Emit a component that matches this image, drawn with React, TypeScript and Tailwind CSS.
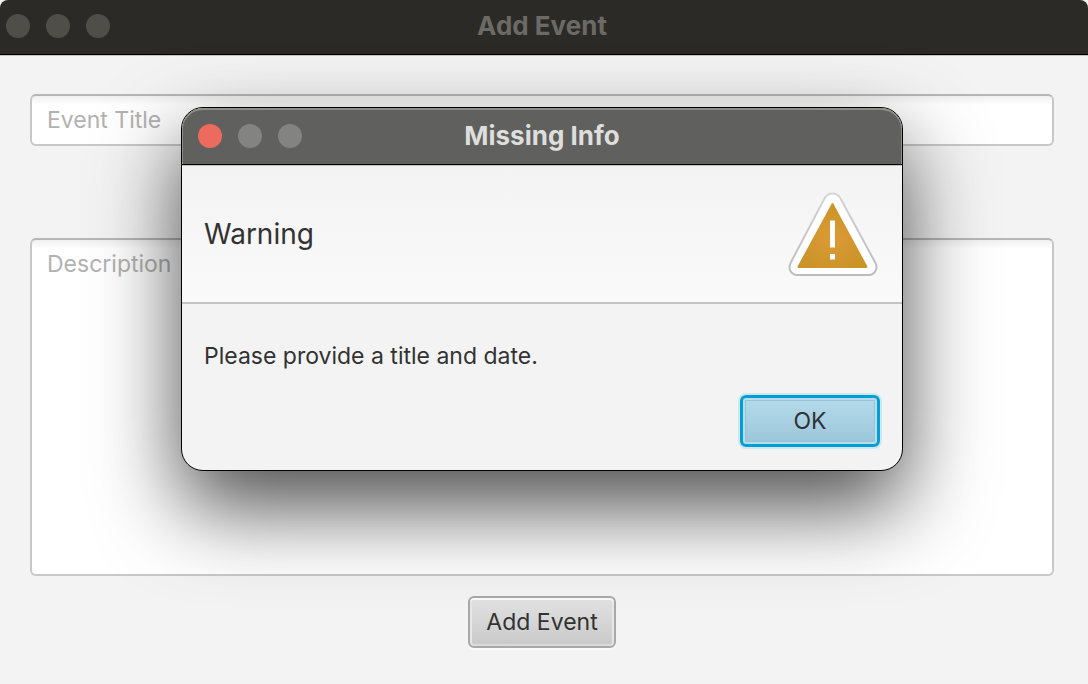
import { useId } from "react";

function TrafficLights({ closeClass, idleClass }: { closeClass: string; idleClass: string }) {
  return (
    <div className="flex gap-4">
      <button type="button" aria-label="Close" className={`size-6 rounded-full ${closeClass}`} />
      <button type="button" aria-label="Minimize" className={`size-6 rounded-full ${idleClass}`} />
      <button type="button" aria-label="Zoom" className={`size-6 rounded-full ${idleClass}`} />
    </div>
  );
}

function WarningIcon() {
  const fill = useId();
  const edge = useId();
  return (
    <svg width="90" height="84" viewBox="0 0 90 84" aria-hidden="true">
      <defs>
        <radialGradient id={fill} cx="0.5" cy="0.55" r="0.5">
          <stop offset="0" stopColor="#dd9a36" />
          <stop offset="1" stopColor="#cb9429" />
        </radialGradient>
        <linearGradient id={edge} x1="0" y1="0" x2="0" y2="1">
          <stop offset="0" stopColor="#d4d4d4" />
          <stop offset="1" stopColor="#bcbcbc" />
        </linearGradient>
      </defs>
      <path
        d="M36.5 6.5C40 -0.2 49 -0.2 52.500 6.500L87.200 70.500C90.400 76.600 87 83 80.500 83H9.500C3 83 -0.400 76.600 2.800 70.500Z"
        fill="#fff"
        stroke={`url(#${edge})`}
        strokeWidth="2"
      />
      <path
        d="M43.600 11.800Q44.500 10.200 45.400 11.800L79.200 74Q80 76 78.200 76H10.800Q9 76 9.800 74Z"
        fill={`url(#${fill})`}
      />
      <path d="M42 28.500h5v27h-5zM42 62h5v5.500h-5z" fill="#fff" />
    </svg>
  );
}

export default function App() {
  return (
    <div className="relative flex min-h-screen flex-col overflow-hidden bg-[#f3f3f3] font-['Inter','Liberation_Sans',sans-serif] text-[#323232]">
      <header className="grid h-[55px] grid-cols-[1fr_auto_1fr] items-center rounded-t-lg border-b border-black bg-[#2c2a26] pb-[2px] pl-[6px] pr-[10px] shadow-[0_1px_0_#c4c4c4]">
        <TrafficLights closeClass="bg-[#4f4e49]" idleClass="bg-[#4f4e49]" />
        <h1 className="text-[26px] font-bold leading-8 text-[#6b6a66]">Add Event</h1>
      </header>

      <form
        className="flex flex-1 flex-col items-center pb-9 pl-[30px] pr-[34px] pt-[39px]"
        onSubmit={(e) => e.preventDefault()}
      >
        <input
          type="text"
          aria-label="Event Title"
          placeholder="Event Title"
          className="h-[52px] w-full rounded-md border-2 border-[#c8c8c8] border-t-[#b6b6b6] bg-white bg-linear-to-b from-[#f0f0f0] to-white to-[9px] px-[15px] text-[23px] outline-none placeholder:text-[#b2b2b2]"
        />
        <textarea
          aria-label="Description"
          placeholder="Description"
          className="mt-[92px] w-full flex-1 resize-none rounded-md border-2 border-[#c8c8c8] border-t-[#b6b6b6] bg-white bg-linear-to-b from-[#f0f0f0] to-white to-[9px] px-[15px] py-2 text-[23px] leading-8 outline-none placeholder:text-[#b2b2b2]"
        />
        <button
          type="submit"
          className="mt-5 h-[52px] rounded-md border-2 border-[#a9a9a9] bg-linear-to-b from-[#e2e2e2] to-[#c9c9c9] px-4 text-[23px] shadow-[inset_0_2px_0_#fbfbfb,inset_2px_0_0_#e6e6e6,inset_-2px_0_0_#e6e6e6,inset_0_-2px_0_#dadada,0_2px_0_#fafafa]"
        >
          Add Event
        </button>
      </form>

      <div className="absolute inset-x-0 top-[107px] flex justify-center pr-1">
        <section
          role="alertdialog"
          aria-labelledby="alert-title"
          aria-describedby="alert-text"
          className="w-[722px] overflow-hidden rounded-[22px] border border-black bg-[#f3f3f3] shadow-[0_36px_84px_rgba(0,0,0,0.7)]"
        >
          <header className="grid h-[57px] grid-cols-[1fr_auto_1fr] items-center rounded-t-[21px] border-b border-black bg-[#60605e] px-4 shadow-[inset_0_2px_0_#8e8e8c,inset_1px_0_0_#8e8e8c,inset_-1px_0_0_#8e8e8c]">
            <TrafficLights closeClass="bg-[#ed6a5e]" idleClass="bg-[#838381]" />
            <h2 id="alert-title" className="text-[26px] font-bold leading-8 text-[#dededc]">
              Missing Info
            </h2>
          </header>
          <div className="flex h-[139px] items-center justify-between border-b-2 border-[#c4c4c4] bg-linear-to-b from-[#f3f3f3] to-[#fafafa] pl-[22px] pr-6 shadow-[inset_0_1px_0_#c4c4c4]">
            <p className="text-[28px] leading-9">Warning</p>
            <WarningIcon />
          </div>
          <div className="px-[22px] pb-[23px] pt-9">
            <p id="alert-text" className="text-[23px] leading-8">
              Please provide a title and date.
            </p>
            <div className="mt-[23px] flex justify-end">
              <button
                type="button"
                className="h-[52px] w-[140px] rounded-md border-[3px] border-[#039ed3] bg-linear-to-b from-[#b4dcec] to-[#9bc5d8] text-[23px] shadow-[0_0_0_2px_#cfe8f0,inset_0_0_0_2px_#b5dfee,inset_0_0_0_3px_#98c2d5]"
              >
                OK
              </button>
            </div>
          </div>
        </section>
      </div>
    </div>
  );
}
